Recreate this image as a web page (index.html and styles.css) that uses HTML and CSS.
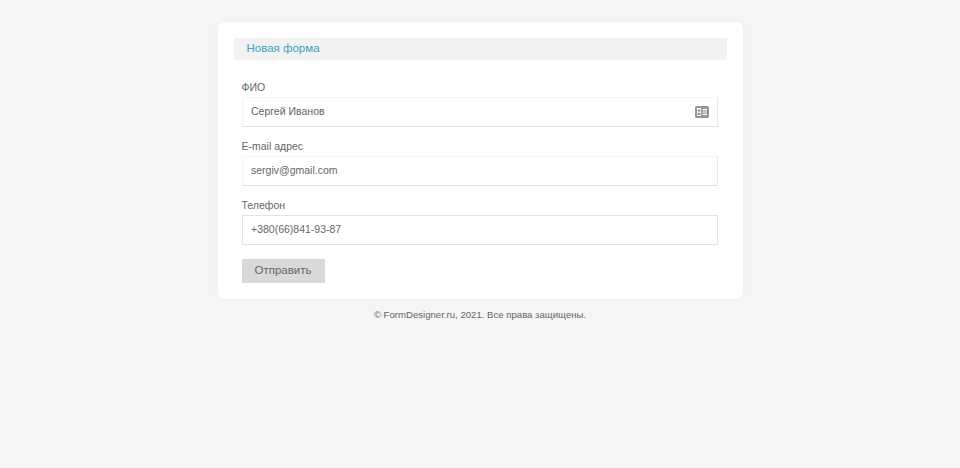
FILE: index.html
```html
<!DOCTYPE html>
<html lang="ru">
<head>
    <meta charset="UTF-8">
    <meta name="viewport" content="width=device-width, initial-scale=1.0">
    <title>Новая форма</title>
    <link rel="stylesheet" href="styles.css">
</head>
<body>
    <div class="card">
        <div class="card-title">Новая форма</div>
        <form class="form">
            <div class="field">
                <label class="field-label">ФИО</label>
                <div class="field-input field-input-name">
                    <span>Сергей Иванов</span>
                    <svg class="field-icon" width="14" height="12" viewBox="0 0 14 12">
                        <path fill="#969696" fill-rule="evenodd" d="M1.500 0h11A1.500 1.500 0 0 1 14 1.500v9a1.500 1.500 0 0 1-1.500 1.500h-11A1.500 1.500 0 0 1 0 10.500v-9A1.500 1.500 0 0 1 1.500 0zM2 2v8h4V2zm5.500 1v1.200H12V3zm0 2.400v1.200H12V5.400zm0 2.400V9H12V7.800z"/>
                        <circle cx="4" cy="4.600" r="1.300" fill="#969696"/>
                        <path fill="#969696" d="M2.400 9c0-1.600.6-2.600 1.600-2.600S5.600 7.400 5.600 9z"/>
                    </svg>
                </div>
            </div>
            <div class="field">
                <label class="field-label">E-mail адрес</label>
                <div class="field-input">sergiv@gmail.com</div>
            </div>
            <div class="field">
                <label class="field-label">Телефон</label>
                <div class="field-input field-input-dark">+380(66)841-93-87</div>
            </div>
            <button class="submit" type="button">Отправить</button>
        </form>
    </div>
    <div class="footer">© FormDesigner.ru, 2021. Все права защищены.</div>
</body>
</html>
```

FILE: styles.css
```css
body {
    margin: 0;
    height: 468px;
    overflow: hidden;
    background: #f5f5f5;
    color: #666;
    font-family: 'Liberation Sans', Arial, sans-serif;
    font-size: 10.5px;
}

.card {
    box-sizing: border-box;
    width: 525px;
    height: 277px;
    margin: 22px auto 0;
    padding: 16px;
    background: #fff;
    border-radius: 7px;
    box-shadow: 0 0 4px rgba(0, 0, 0, 0.04);
}

.card-title {
    height: 22px;
    padding-left: 13px;
    background: #f2f2f2;
    color: #3a9fc4;
    font-size: 11.5px;
    line-height: 21px;
}

.form {
    padding: 20px 9px 0 8px;
}

.field {
    margin-bottom: 12px;
}

.field-label {
    display: block;
    height: 17px;
    line-height: 15px;
}

.field-input {
    box-sizing: border-box;
    display: flex;
    align-items: center;
    justify-content: space-between;
    height: 30px;
    padding: 0 8px 2px 8.5px;
    background: #fff;
    border: 1px solid #f5f5f5;
    border-bottom-color: #e0e0e0;
    border-right-color: #e8e8e8;
}

.field-input-dark {
    border-color: #e4e4e4;
}

.field-icon {
    display: block;
    margin-top: 2px;
}

.submit {
    display: block;
    width: 83px;
    height: 24px;
    margin-top: 14px;
    padding: 0 0 2px;
    background: #d9d9d9;
    border: 0;
    color: #666;
    font-family: inherit;
    font-size: 11.5px;
}

.footer {
    margin-top: 10px;
    text-align: center;
    font-size: 9.6px;
    line-height: 12px;
}
```
